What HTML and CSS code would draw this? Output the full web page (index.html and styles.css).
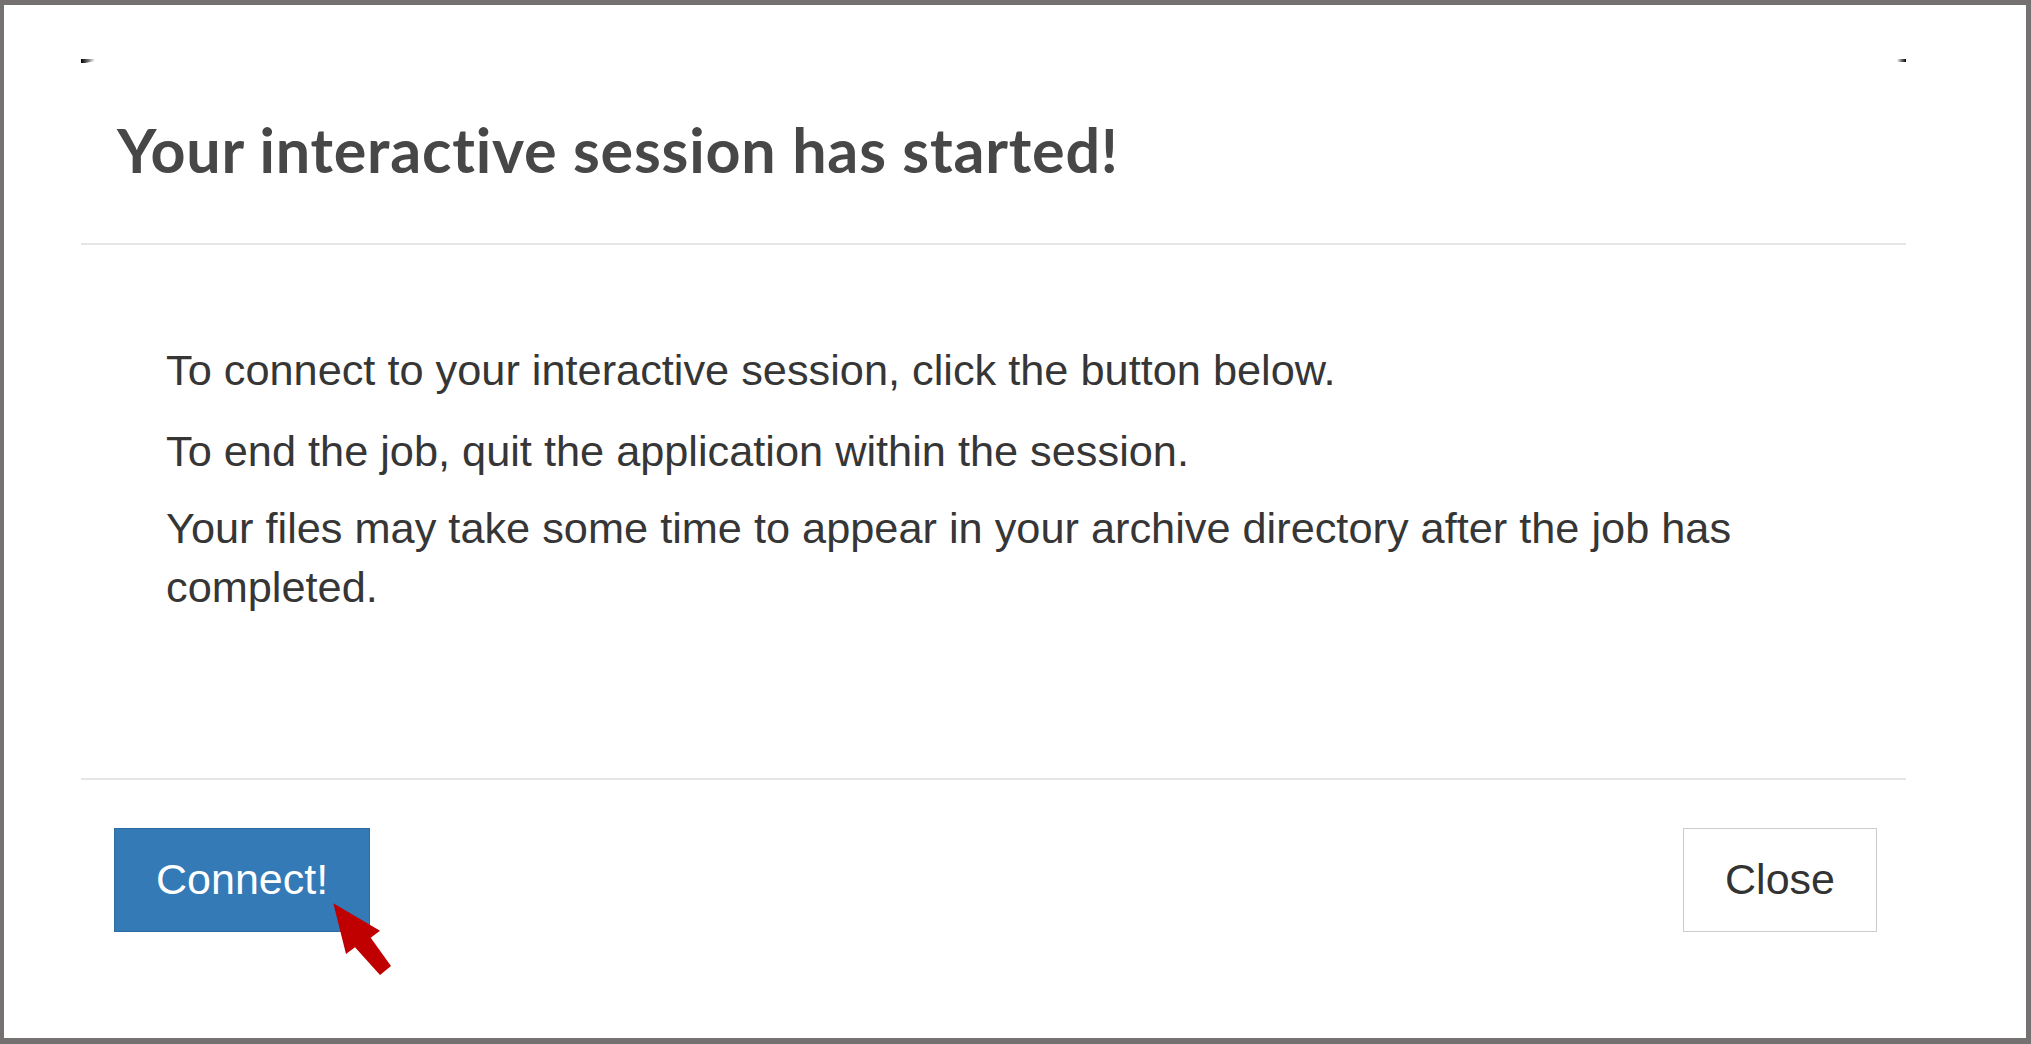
FILE: index.html
```html
<!DOCTYPE html>
<html lang="en">
<head>
<meta charset="utf-8">
<title>Interactive session</title>
<link rel="stylesheet" href="styles.css">
</head>
<body>
  <div class="dialog">
    <div class="corners">
      <span class="corner corner-left"></span>
      <span class="corner corner-right"></span>
    </div>
    <div class="dialog-header">
      <h1 class="dialog-title">Your interactive session has started!</h1>
    </div>
    <div class="dialog-body">
      <p>To connect to your interactive session, click the button below.</p>
      <p>To end the job, quit the application within the session.</p>
      <p>Your files may take some time to appear in your archive directory after the job has completed.</p>
    </div>
    <div class="dialog-footer">
      <div class="btn-wrap">
        <button class="btn btn-primary" type="button">Connect!</button>
        <svg class="pointer" width="65" height="80" viewBox="0 0 65 80" aria-hidden="true">
          <polygon points="3.3,3.3 50,30.7 40.7,37.7 61,66 50,75 25,47.3 16,54" fill="#c00000"/>
        </svg>
      </div>
      <button class="btn btn-default" type="button">Close</button>
    </div>
  </div>
</body>
</html>
```
FILE: styles.css
```css
html, body {
  margin: 0;
  height: 100%;
}

body {
  box-sizing: border-box;
  border-style: solid;
  border-color: #767171;
  border-width: 5px 5px 6px 4px;
  background: #ffffff;
  font-family: "Liberation Sans", Arial, sans-serif;
  color: #333333;
  overflow: hidden;
}

.dialog {
  width: 1825px;
  margin: 54px 0 0 77px;
  background: #ffffff;
}

.corners {
  display: flex;
  justify-content: space-between;
  height: 4px;
}

.corner {
  display: block;
  height: 4px;
}

.corner-left {
  width: 14px;
  background: linear-gradient(to right, #000000, rgba(0, 0, 0, 0.55) 50%, rgba(0, 0, 0, 0));
  clip-path: polygon(0 0, 100% 0, 100% 50%, 30% 100%, 0 100%);
}

.corner-right {
  width: 9px;
  height: 3px;
  background: linear-gradient(to left, #000000, rgba(0, 0, 0, 0.55) 50%, rgba(0, 0, 0, 0));
}

.dialog-header {
  padding: 50px 36px 57px 36px;
  border-bottom: 2px solid #e5e5e5;
}

.dialog-title {
  margin: 0;
  font-family: Lato, "Open Sans", sans-serif;
  font-weight: 700;
  font-size: 61px;
  line-height: 1.2;
  letter-spacing: 0.8px;
  font-variant-ligatures: none;
  color: #474747;
}

.dialog-body {
  padding: 96px 85px 161px 85px;
}

.dialog-body p {
  margin: 0 0 18px 0;
  font-size: 43.3px;
  line-height: 59px;
  color: #363636;
}

.dialog-body p:first-child {
  margin-bottom: 22px;
}

.dialog-body p:last-child {
  margin-bottom: 0;
}

.dialog-footer {
  display: flex;
  justify-content: space-between;
  align-items: flex-start;
  padding: 48px 29px 0 33px;
  border-top: 2px solid #e5e5e5;
}

.btn-wrap {
  position: relative;
}

.btn {
  display: block;
  margin: 0;
  padding: 19px 41px 21px 41px;
  border: 1px solid transparent;
  border-radius: 0;
  font-family: "Liberation Sans", Arial, sans-serif;
  font-size: 43px;
  line-height: 62px;
}

.btn-primary {
  background: #337ab7;
  border-color: #2e6da4;
  color: #ffffff;
}

.btn-default {
  background: #ffffff;
  border-color: #cccccc;
  color: #333333;
}

.pointer {
  position: absolute;
  left: 216px;
  top: 72px;
  display: block;
}
```
